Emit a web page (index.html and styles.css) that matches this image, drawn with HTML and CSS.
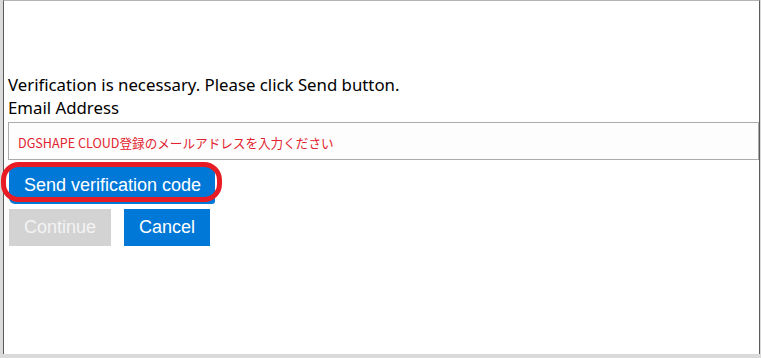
FILE: index.html
```html
<!DOCTYPE html>
<html lang="en">
<head>
    <meta charset="UTF-8">
    <meta name="viewport" content="width=device-width, initial-scale=1.0">
    <title>Verification</title>

    <link rel="stylesheet" href="styles.css">
</head>
<body>
    <div class="window">
        <form action="" id="verifyForm" class="verify-form">
            <p class="intro">Verification is necessary. Please click Send button.</p>
            <label for="email" class="field-label">Email Address</label>
            <input type="email" name="email" id="email" class="email-input" placeholder="DGSHAPE CLOUD登録のメールアドレスを入力ください">

            <div class="send-row">
                <button type="button" class="btn btn-blue btn-send">Send verification code</button>
                <span class="highlight-ring"></span>
            </div>

            <div class="button-group">
                <button type="button" class="btn btn-disabled" disabled>Continue</button>
                <button type="button" class="btn btn-blue">Cancel</button>
            </div>
        </form>
    </div>
</body>
</html>
```

FILE: styles.css
```css
* {
    margin: 0;
    padding: 0;
    box-sizing: border-box;
}

html, body {
    height: 358px;
    overflow: hidden;
}

body {
    background: #dadada;
    font-family: "Noto Sans", "Noto Sans CJK JP", sans-serif;
    color: #000;
}

.window {
    margin-left: 3px;
    width: 757px;
    height: 354px;
    background: #fff;
    border-top: 1px solid #b4b4b4;
    border-left: 1px solid #5a5a5a;
    border-right: 1px solid #5a5a5a;
    padding: 72px 0 0 4px;
}

.intro,
.field-label {
    display: block;
    font-size: 16.8px;
    line-height: 23px;
}

.email-input {
    display: block;
    width: 751px;
    height: 38px;
    margin-top: 3px;
    border: 1px solid #ababab;
    background: #fdfdfd;
    padding: 3px 9px 0;
    font-family: "Noto Sans CJK JP", sans-serif;
    font-size: 12.6px;
    outline: none;
}

.email-input::placeholder {
    color: #e2232f;
    opacity: 1;
}

.send-row {
    position: relative;
    margin: 7px 0 0 1px;
    width: 206px;
}

.btn {
    display: block;
    height: 37px;
    padding: 0 15px;
    border: none;
    font-family: "Liberation Sans", Arial, sans-serif;
    font-size: 18px;
    white-space: nowrap;
    color: #fff;
    cursor: pointer;
}

.btn-blue {
    background: #0078d7;
}

.btn-send {
    width: 206px;
    border-radius: 6px 6px 3px 6px;
}

.btn-disabled {
    background: #d3d3d3;
    color: #f3f3f3;
    cursor: default;
}

/* red annotation drawn around the send button */
.highlight-ring {
    position: absolute;
    left: -8px;
    top: -5px;
    width: 221px;
    height: 40px;
    border: 5px solid #e81c24;
    border-radius: 18px;
    pointer-events: none;
}

.button-group {
    display: flex;
    gap: 13px;
    margin: 5px 0 0 1px;
}
```
